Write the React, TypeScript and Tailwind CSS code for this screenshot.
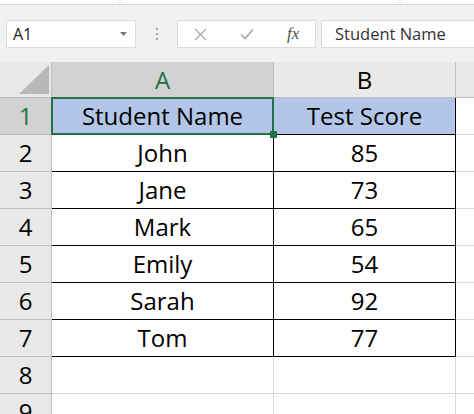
import React from 'react';

type Row = { n: number; a?: string; b?: string };

const rows: Row[] = [
  { n: 1, a: 'Student Name', b: 'Test Score' },
  { n: 2, a: 'John', b: '85' },
  { n: 3, a: 'Jane', b: '73' },
  { n: 4, a: 'Mark', b: '65' },
  { n: 5, a: 'Emily', b: '54' },
  { n: 6, a: 'Sarah', b: '92' },
  { n: 7, a: 'Tom', b: '77' },
  { n: 8 },
  { n: 9 },
];

function Toolbar() {
  return (
    <div className="h-[62px] bg-[#f1f1f1] flex flex-col">
      <div className="h-[5px] flex gap-[3px] border-b border-[#d6d6d6]">
        <div className="w-[119px] bg-white" />
        <div className="w-[276px] bg-white" />
        <div className="flex-1 bg-white" />
      </div>
      <div className="mt-[15px] h-[28px] flex items-stretch">
        <div className="ml-[6px] w-[130px] bg-white border border-[#dcdcdc] flex items-center justify-between pl-[6px] pr-[8px]">
          <span className="text-[16px] text-[#222]">A1</span>
          <svg width="7" height="4" viewBox="0 0 7 4">
            <path d="M0 0 L7 0 L3.5 4 Z" fill="#777" />
          </svg>
        </div>
        <div className="w-[41px] flex flex-col items-center justify-center gap-[3px]">
          <span className="w-[2px] h-[2px] bg-[#a5a5a5]" />
          <span className="w-[2px] h-[2px] bg-[#a5a5a5]" />
          <span className="w-[2px] h-[2px] bg-[#a5a5a5]" />
        </div>
        <div className="w-[139px] bg-white border border-[#dcdcdc] flex items-center">
          <svg className="ml-[16px]" width="13" height="13" viewBox="0 0 13 13">
            <path d="M1 1 L12 12 M12 1 L1 12" stroke="#a8a8a8" strokeWidth="1.3" />
          </svg>
          <svg className="ml-[33px]" width="14" height="12" viewBox="0 0 14 12">
            <path d="M1 6.5 L5 10.5 L13 1.5" stroke="#b5b5b5" strokeWidth="2" fill="none" />
          </svg>
          <span
            className="ml-[33px] text-[17px] italic text-[#555]"
            style={{ fontFamily: '"Liberation Serif", serif' }}
          >
            fx
          </span>
        </div>
        <div className="ml-[5px] flex-1 bg-white border border-r-0 border-[#dcdcdc] flex items-center pl-[13px]">
          <span className="text-[16.5px] text-[#333]">Student Name</span>
        </div>
      </div>
    </div>
  );
}

function Grid() {
  return (
    <div className="grid grid-cols-[52px_222px_182px_1fr] auto-rows-[37px] grid-rows-[36px] text-[24px] text-black">
      <div className="relative bg-[#e9e9e9] border-r border-b border-[#bdbdbd]">
        <svg className="absolute right-[2px] bottom-[3px]" width="30" height="29" viewBox="0 0 30 29">
          <path d="M30 0 L30 29 L0 29 Z" fill="#b8b8b8" />
        </svg>
      </div>
      <div className="bg-[#d2d2d2] border-r border-b border-[#bdbdbd] flex items-center justify-center text-[#217346]">
        A
      </div>
      <div className="bg-[#e9e9e9] border-r border-b border-[#bdbdbd] flex items-center justify-center">B</div>
      <div className="bg-[#e9e9e9] border-b border-[#bdbdbd]" />

      {rows.map((r) => {
        const inTable = r.n <= 7;
        const head = r.n === 1;
        const cellBorder = inTable ? 'border-black' : 'border-[#dadada]';
        return (
          <React.Fragment key={r.n}>
            <div
              className={
                'border-r border-b border-[#bdbdbd] flex items-center justify-center ' +
                (head ? 'bg-[#d2d2d2] text-[#217346]' : 'bg-[#e9e9e9]')
              }
            >
              {r.n}
            </div>
            <div
              className={
                'relative border-r border-b flex items-center justify-center ' +
                cellBorder +
                (head ? ' bg-[#b4c6e7]' : ' bg-white')
              }
            >
              {r.a}
              {head && (
                <>
                  <div className="absolute -left-px -top-px -right-px -bottom-px border-2 border-[#217346]" />
                  <div className="absolute z-10 -right-[4px] -bottom-[4px] w-[7px] h-[7px] bg-[#217346]" />
                </>
              )}
            </div>
            <div
              className={
                'border-r border-b flex items-center justify-center ' +
                cellBorder +
                (head ? ' bg-[#b4c6e7]' : ' bg-white')
              }
            >
              {r.b}
            </div>
            <div className="bg-white border-b border-[#dadada]" />
          </React.Fragment>
        );
      })}
    </div>
  );
}

export default function App() {
  return (
    <div
      className="w-[474px] h-[414px] overflow-hidden bg-white"
      style={{ fontFamily: '"Open Sans", "Noto Sans", sans-serif' }}
    >
      <Toolbar />
      <Grid />
    </div>
  );
}
